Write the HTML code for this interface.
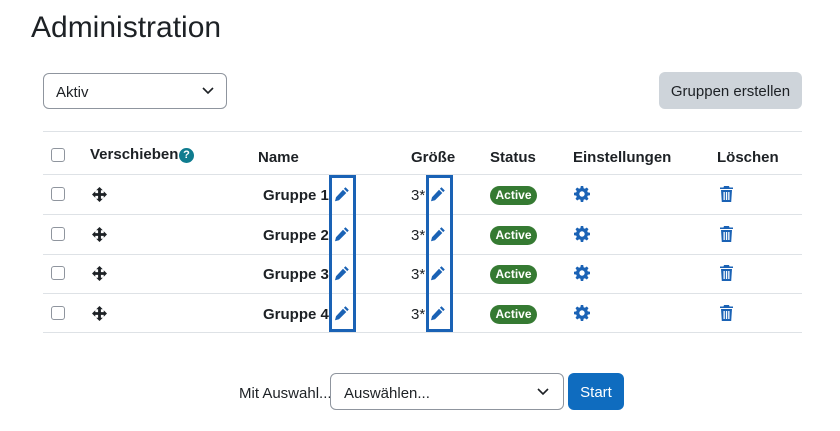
<!DOCTYPE html>
<html><head><meta charset="utf-8"><style>
*{box-sizing:border-box;margin:0;padding:0}
body{width:840px;height:431px;background:#fff;font-family:"Liberation Sans",sans-serif;color:#1d2125;position:relative;overflow:hidden;font-size:15px}
.a{position:absolute}
.line{position:absolute;left:43px;width:759px;height:1px;background:#dee2e6}
.cb{position:absolute;left:51px;width:14px;height:14px;border:1px solid #8f959e;border-radius:3px;background:#fff}
.h{position:absolute;font-weight:bold;font-size:15px}
.name{position:absolute;font-weight:bold;font-size:15px;left:263px}
.badge{position:absolute;left:490px;width:47px;height:19px;background:#357a32;color:#fff;border-radius:10px;font-weight:bold;font-size:12px;text-align:center;line-height:19px}
.box{position:absolute;top:175px;height:157px;width:27px;border:3px solid #1a62b5}
</style></head><body>
<div class="a" style="left:31px;top:11px;font-size:30px;color:#1d2125">Administration</div>
<div class="a" style="left:43px;top:73px;width:184px;height:36px;border:1px solid #8f959e;border-radius:6px;padding:10px 12px;font-size:15px">Aktiv
<svg class="a" style="right:12px;top:13px" width="12" height="8" viewBox="0 0 12 8"><path d="M1 1l5 5 5-5" fill="none" stroke="#1d2125" stroke-width="1.6"/></svg></div>
<div class="a" style="left:659px;top:72px;width:143px;height:37px;background:#ced4da;border-radius:6px;text-align:center;line-height:39px;font-size:15px">Gruppen erstellen</div>

<div class="line" style="top:131px"></div>
<div class="line" style="top:174px"></div>
<div class="line" style="top:214px"></div>
<div class="line" style="top:254px"></div>
<div class="line" style="top:293px"></div>
<div class="line" style="top:332px"></div>

<div class="cb" style="top:148px"></div>
<div class="h" style="left:90px;top:146px">Verschieben</div>
<div class="a" style="left:179px;top:148px;width:15px;height:15px;border-radius:50%;background:#0f7c8f;color:#fff;font-size:11px;font-weight:bold;text-align:center;line-height:15px">?</div>
<div class="h" style="left:258px;top:149px">Name</div>
<div class="h" style="left:411px;top:149px">Größe</div>
<div class="h" style="left:490px;top:149px">Status</div>
<div class="h" style="left:573px;top:149px">Einstellungen</div>
<div class="h" style="left:717px;top:149px">Löschen</div>

<div id="rows"></div>
<script>
var tops=[194,234,273,313],h='';
tops.forEach(function(t,i){
h+='<div class="cb" style="top:'+(t-7)+'px"></div>';
h+='<svg class="a" style="left:92px;top:'+(t-7)+'px" width="15" height="15" viewBox="0 0 16 16"><path d="M8 0l3.5 3.5H9.5v3h3V4.5L16 8l-3.5 3.5V9.5h-3v3h2L8 16l-3.5-3.5h2v-3h-3v2L0 8l3.5-3.5v2h3v-3h-2z" fill="#1d2125"/></svg>';
h+='<div class="name" style="top:'+(t-7)+'px">Gruppe '+(i+1)+'</div>';
h+='<svg class="a" style="left:334px;top:'+(t-8)+'px" width="16" height="16" viewBox="0 0 16 16"><path d="M11.5 1.2l3.3 3.3-1.6 1.6-3.3-3.3zM9 3.7l3.3 3.3L5 14.3 1 15.3l1-4z" fill="#1a62b5"/></svg>';
h+='<div class="a" style="left:411px;top:'+(t-7)+'px">3*</div>';
h+='<svg class="a" style="left:430px;top:'+(t-8)+'px" width="16" height="16" viewBox="0 0 16 16"><path d="M11.5 1.2l3.3 3.3-1.6 1.6-3.3-3.3zM9 3.7l3.3 3.3L5 14.3 1 15.3l1-4z" fill="#1a62b5"/></svg>';
h+='<div class="badge" style="top:'+(t-8)+'px">Active</div>';
h+='<svg class="a" style="left:574px;top:'+(t-8)+'px" width="16" height="16" viewBox="0 0 16 16"><path d="M6.8 0h2.4l.4 2.2 1.3.6 1.9-1.3 1.7 1.7-1.3 1.9.6 1.3 2.2.4v2.4l-2.2.4-.6 1.3 1.3 1.9-1.7 1.7-1.9-1.3-1.3.6-.4 2.2H6.8l-.4-2.2-1.3-.6-1.9 1.3-1.7-1.7 1.3-1.9-.6-1.3L0 9.2V6.8l2.2-.4.6-1.3-1.3-1.9 1.7-1.7 1.9 1.3 1.3-.6zM8 5.3A2.7 2.7 0 1 0 8 10.7 2.7 2.7 0 1 0 8 5.3z" fill="#1a62b5" fill-rule="evenodd"/></svg>';
h+='<svg class="a" style="left:720px;top:'+(t-8)+'px" width="13" height="16" viewBox="0 0 13 16"><path d="M4 0h5l.5 1.5H13V3H0V1.5h3.5zM1 4h11l-.8 12H1.8zM3.5 6v8h1.3V6zM5.9 6v8h1.3V6zM8.2 6v8h1.3V6z" fill="#1a62b5" fill-rule="evenodd"/></svg>';
});
document.getElementById('rows').innerHTML=h;
</script>
<div class="box" style="left:329px"></div>
<div class="box" style="left:426px"></div>

<div class="a" style="left:239px;top:385px">Mit Auswahl...</div>
<div class="a" style="left:330px;top:373px;width:234px;height:37px;border:1px solid #8f959e;border-radius:6px;padding:11px 13px">Auswählen...
<svg class="a" style="right:14px;top:14px" width="12" height="8" viewBox="0 0 12 8"><path d="M1 1l5 5 5-5" fill="none" stroke="#1d2125" stroke-width="1.6"/></svg></div>
<div class="a" style="left:568px;top:373px;width:56px;height:37px;background:#0f6cbf;border-radius:6px;color:#fff;text-align:center;line-height:40px">Start</div>
</body></html>
